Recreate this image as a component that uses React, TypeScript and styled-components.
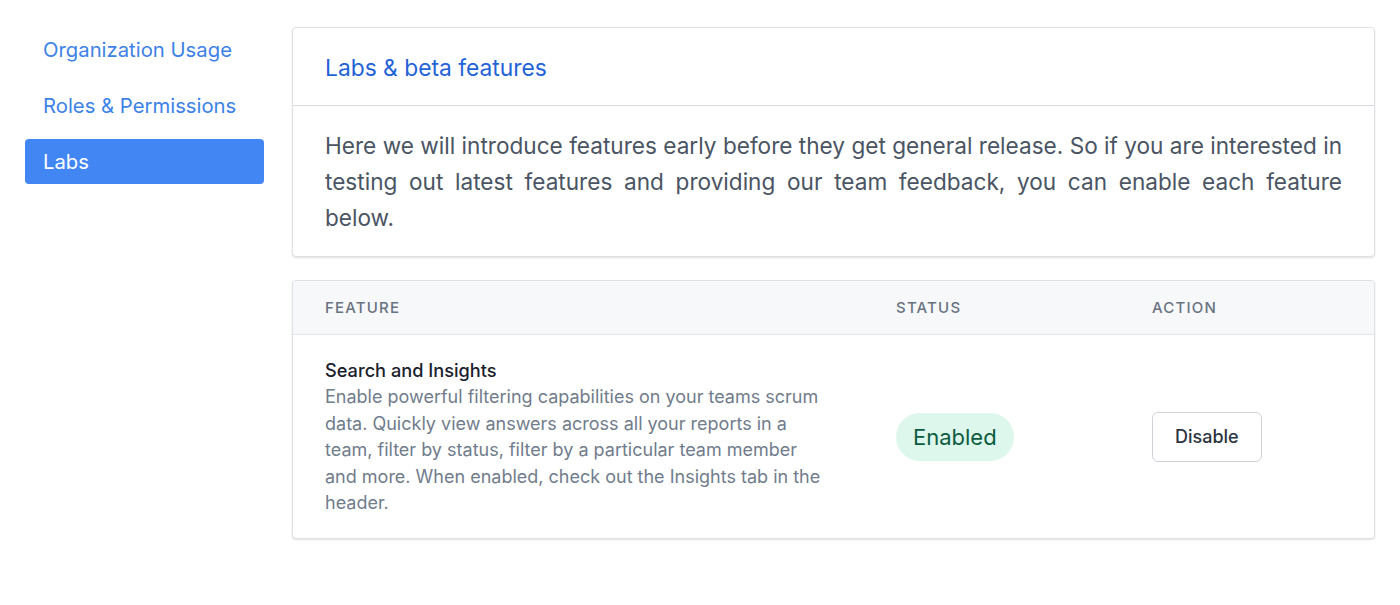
import React from "react";
import styled, { createGlobalStyle } from "styled-components";

const Global = createGlobalStyle`
  html, body { margin: 0; padding: 0; background: #ffffff; }
  body { font-family: Inter, "Liberation Sans", Arial, sans-serif; -webkit-font-smoothing: antialiased; }
  * { box-sizing: border-box; }
`;

const Page = styled.div`
  display: flex;
  align-items: flex-start;
  gap: 28px;
  padding: 27px 25px;
  width: 1400px;
`;

const Sidebar = styled.nav`
  width: 239px;
  flex: none;
  display: flex;
  flex-direction: column;
  gap: 11px;
`;

const NavItem = styled.a<{ $active?: boolean }>`
  display: flex;
  align-items: center;
  height: 45px;
  padding: 0 18px;
  border-radius: 4px;
  font-size: 20.3px;
  text-decoration: none;
  cursor: pointer;
  color: ${(p) => (p.$active ? "#ffffff" : "#3d82e6")};
  background: ${(p) => (p.$active ? "#4286f4" : "transparent")};
`;

const Main = styled.div`
  flex: 1;
  display: flex;
  flex-direction: column;
  gap: 23px;
`;

const Card = styled.section`
  background: #ffffff;
  border: 1px solid #dfe1e5;
  border-radius: 4px;
  box-shadow: 0 1px 2px rgba(0, 0, 0, 0.12);
  overflow: hidden;
`;

const CardHeader = styled.header`
  padding: 23px 32px 21px;
  border-bottom: 1px solid #d6d9de;
`;

const CardTitle = styled.h2`
  margin: 0;
  font-size: 22.8px;
  line-height: 33px;
  font-weight: 400;
  color: #1f63d6;
`;

const CardBody = styled.div`
  padding: 22px 32px 20px;
`;

const Intro = styled.p`
  margin: 0;
  font-size: 22.6px;
  line-height: 36px;
  color: #4a5463;
  text-align: justify;
`;

const Row = styled.div<{ $head?: boolean }>`
  display: grid;
  grid-template-columns: 571px 256px 1fr;
  padding: 0 32px;
  align-items: center;
  ${(p) =>
    p.$head
      ? `height: 54px; background: #f7f8fa; border-bottom: 1px solid #e2e5e9;`
      : `padding-top: 22px; padding-bottom: 21px;`}
`;

const HeadCell = styled.div`
  font-size: 15px;
  letter-spacing: 1.2px;
  text-transform: uppercase;
  color: #697280;
  font-weight: 500;
`;

const FeatureCell = styled.div`
  max-width: 508px;
`;

const FeatureName = styled.div`
  font-size: 18.2px;
  line-height: 27px;
  font-weight: 500;
  color: #1a202c;
`;

const FeatureDesc = styled.div`
  font-size: 18px;
  line-height: 26.5px;
  color: #717c8c;
`;

const Badge = styled.span`
  display: inline-flex;
  align-items: center;
  height: 48px;
  padding: 0 17px;
  border-radius: 24px;
  background: #def7ec;
  color: #0b5c3f;
  font-size: 22px;
  justify-self: start;
`;

const Button = styled.button`
  justify-self: start;
  height: 50px;
  padding: 0 22px;
  border: 1px solid #cfd3d8;
  border-radius: 6px;
  background: #ffffff;
  color: #2d3340;
  font-family: inherit;
  font-size: 18px;
  font-weight: 500;
  cursor: pointer;
`;

export default function App() {
  return (
    <>
      <Global />
      <Page>
        <Sidebar>
          <NavItem>Organization Usage</NavItem>
          <NavItem>Roles &amp; Permissions</NavItem>
          <NavItem $active>Labs</NavItem>
        </Sidebar>
        <Main>
          <Card>
            <CardHeader>
              <CardTitle>Labs &amp; beta features</CardTitle>
            </CardHeader>
            <CardBody>
              <Intro>
                Here we will introduce features early before they get general release. So if you are
                interested in testing out latest features and providing our team feedback, you can
                enable each feature below.
              </Intro>
            </CardBody>
          </Card>
          <Card>
            <Row $head>
              <HeadCell>Feature</HeadCell>
              <HeadCell>Status</HeadCell>
              <HeadCell>Action</HeadCell>
            </Row>
            <Row>
              <FeatureCell>
                <FeatureName>Search and Insights</FeatureName>
                <FeatureDesc>
                  Enable powerful filtering capabilities on your teams scrum data. Quickly view
                  answers across all your reports in a team, filter by status, filter by a particular
                  team member and more. When enabled, check out the Insights tab in the header.
                </FeatureDesc>
              </FeatureCell>
              <Badge>Enabled</Badge>
              <Button>Disable</Button>
            </Row>
          </Card>
        </Main>
      </Page>
    </>
  );
}
